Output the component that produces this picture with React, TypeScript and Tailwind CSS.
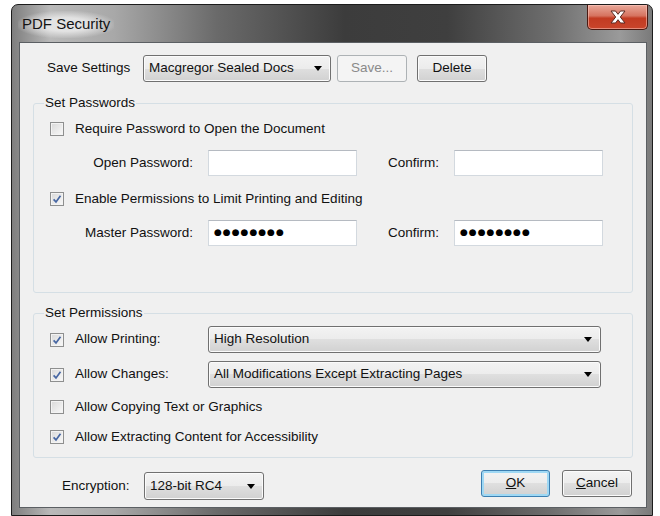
import React from 'react';

// Windows 7 style "PDF Security" dialog

const buttonFace =
  'border-[#707070] bg-[linear-gradient(#f3f3f3_0%,#ececec_50%,#dfdfdf_50%,#d1d1d1_100%)] shadow-[inset_0_0_0_1px_#fbfbfb]';

const Checkbox: React.FC<{ checked?: boolean }> = ({ checked }) => (
  <span className="flex h-[14px] w-[14px] shrink-0 items-center justify-center border border-[#8e8f8f] bg-[linear-gradient(135deg,#d9d9d9,#f9f9f9)] shadow-[inset_0_0_0_1px_#f3f3f3]">
    {checked && (
      <svg width="10" height="10" viewBox="0 0 10 10">
        <path d="M1.6 5.3 L4 7.9 L8.5 1.7" fill="none" stroke="#4767a3" strokeWidth="1.7" />
      </svg>
    )}
  </span>
);

const Arrow = () => (
  <svg width="8" height="5" viewBox="0 0 8 5" className="shrink-0">
    <path d="M0 0 H8 L4 5 Z" fill="#000" />
  </svg>
);

const Combo: React.FC<{ value: string; className: string }> = ({ value, className }) => (
  <div
    className={`flex items-center justify-between rounded-[3px] border pl-[5px] pr-[8px] ${buttonFace} ${className}`}
  >
    <span>{value}</span>
    <Arrow />
  </div>
);

const Button: React.FC<{
  children: React.ReactNode;
  className: string;
  disabled?: boolean;
  focused?: boolean;
}> = ({ children, className, disabled, focused }) => {
  let look = buttonFace;
  if (disabled) look = 'border-[#adb2b5] bg-[#f4f4f4] text-[#8a8a8a]';
  if (focused)
    look =
      'border-[#3c7fb1] bg-[linear-gradient(#f3f3f3_0%,#ececec_50%,#dfdfdf_50%,#d1d1d1_100%)] shadow-[inset_0_0_0_2px_#9fd8f4]';
  return (
    <div className={`flex items-center justify-center rounded-[3px] border ${look} ${className}`}>
      {children}
    </div>
  );
};

const TextBox: React.FC<{ dots?: boolean }> = ({ dots }) => (
  <div className="flex h-[26px] w-[149px] items-center border border-[#d3d9df] border-t-[#b5bac1] bg-white pl-[5px]">
    {dots && (
      <span className="font-['DejaVu_Sans',sans-serif] text-[9px] tracking-[1px] text-black">
        ●●●●●●●●
      </span>
    )}
  </div>
);

const CheckRow: React.FC<{ checked?: boolean; label: string; className: string }> = ({
  checked,
  label,
  className,
}) => (
  <div className={`flex h-[20px] items-center pl-[16px] ${className}`}>
    <Checkbox checked={checked} />
    <span className="ml-[11px]">{label}</span>
  </div>
);

const PasswordRow: React.FC<{ label: string; dots?: boolean; className: string }> = ({
  label,
  dots,
  className,
}) => (
  <div className={`flex h-[26px] items-center ${className}`}>
    <span className="w-[159px] text-right">{label}</span>
    <div className="ml-[15px]">
      <TextBox dots={dots} />
    </div>
    <span className="w-[97px] pl-[31px]">Confirm:</span>
    <TextBox dots={dots} />
  </div>
);

const PermissionRow: React.FC<{ label: string; value: string; className: string }> = ({
  label,
  value,
  className,
}) => (
  <div className={`flex h-[27px] items-center pl-[16px] ${className}`}>
    <Checkbox checked />
    <span className="w-[144px] pl-[11px]">{label}</span>
    <Combo value={value} className="h-[27px] w-[393px]" />
  </div>
);

export default function App() {
  return (
    <div className="h-[516px] w-[660px] overflow-hidden bg-white pl-[11px] pt-[4px] font-['Liberation_Sans',Arial,sans-serif] text-[13.5px] text-[#111]">
      <div className="flex h-[512px] w-[642px] flex-col rounded-t-[7px] border border-[#1c1c1c] bg-[linear-gradient(90deg,#7e7e7e_0%,#b9b9b9_6%,#a8a8a8_16%,#6a6a6a_32%,#3c3c3c_52%,#3f3f3f_68%,#6d6d6d_84%,#9a9a9a_95%,#7a7a7a_100%)]">
        {/* title bar */}
        <div className="flex h-[37px] shrink-0 items-start justify-between">
          <span className="ml-[6px] mt-[6px] rounded-[10px] bg-[radial-gradient(ellipse_at_center,rgba(235,235,235,0.85)_35%,rgba(235,235,235,0)_75%)] px-[4px] py-[2px] text-[15px] text-[#141414]">
            PDF Security
          </span>
          <div className="mr-[4px] flex h-[25px] w-[61px] items-center justify-center rounded-b-[5px] border border-t-0 border-[#4b1a12] bg-[linear-gradient(#e9a99b_0%,#d6735f_45%,#c23b22_55%,#c9452b_100%)] shadow-[inset_0_0_0_1px_rgba(255,210,200,0.5)]">
            <svg width="18" height="14" viewBox="0 0 18 14">
              <path
                d="M2 1 H6.5 L9 4.3 L11.5 1 H16 L11.3 7 L16 13 H11.5 L9 9.7 L6.5 13 H2 L6.7 7 Z"
                fill="#fff"
                stroke="#5a2a22"
                strokeWidth="1"
              />
            </svg>
          </div>
        </div>

        {/* client area */}
        <div className="ml-[7px] flex h-[466px] w-[628px] shrink-0 flex-col border border-[#5b5f63] bg-[#f0f0f0] px-[13px] pt-[12px]">
          <div className="flex h-[27px] items-center pl-[14px]">
            <span className="w-[96px]">Save Settings</span>
            <Combo value="Macgregor Sealed Docs" className="h-[27px] w-[188px]" />
            <Button disabled className="ml-[6px] h-[27px] w-[70px]">
              Save...
            </Button>
            <Button className="ml-[10px] h-[27px] w-[70px]">Delete</Button>
          </div>

          <fieldset className="mt-[13px] rounded-[3px] border border-[#d5dfe5] pb-[46px]">
            <legend className="ml-[10px] px-[1px] leading-[16px]">Set Passwords</legend>
            <CheckRow label="Require Password to Open the Document" className="mt-[8px]" />
            <PasswordRow label="Open Password:" className="mt-[11px]" />
            <CheckRow checked label="Enable Permissions to Limit Printing and Editing" className="mt-[13px]" />
            <PasswordRow label="Master Password:" dots className="mt-[11px]" />
          </fieldset>

          <fieldset className="mt-[12px] rounded-[3px] border border-[#d5dfe5] pb-[10px]">
            <legend className="ml-[10px] px-[1px] leading-[16px]">Set Permissions</legend>
            <PermissionRow label="Allow Printing:" value="High Resolution" className="mt-[5px]" />
            <PermissionRow
              label="Allow Changes:"
              value="All Modifications Except Extracting Pages"
              className="mt-[8px]"
            />
            <CheckRow label="Allow Copying Text or Graphics" className="mt-[9px]" />
            <CheckRow checked label="Allow Extracting Content for Accessibility" className="mt-[10px]" />
          </fieldset>

          <div className="mt-[12px] flex items-start pl-[29px] pr-[1px]">
            <div className="mt-[2px] flex h-[28px] items-center">
              <span className="w-[82px]">Encryption:</span>
              <Combo value="128-bit RC4" className="h-[28px] w-[120px]" />
            </div>
            <Button focused className="ml-auto h-[27px] w-[69px]">
              <u>O</u>K
            </Button>
            <Button className="ml-[12px] h-[27px] w-[70px]">
              <u>C</u>ancel
            </Button>
          </div>
        </div>
      </div>
    </div>
  );
}
